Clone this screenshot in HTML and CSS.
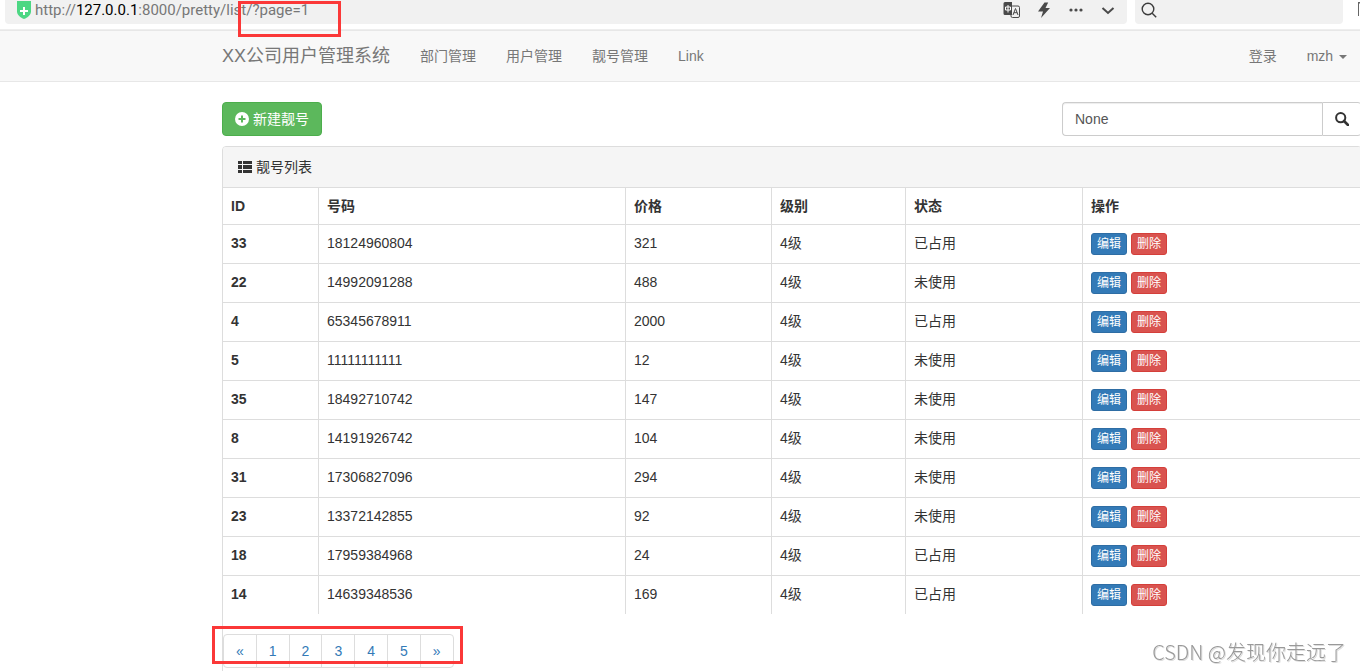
FILE: index.html
```html
<!DOCTYPE html>
<html lang="zh-CN">
<head>
<meta charset="utf-8">
<title>靓号列表</title>
<link rel="stylesheet" href="styles.css">
</head>
<body>
<svg class="sprite" aria-hidden="true">
  <symbol id="search" viewBox="0 0 14 14"><circle cx="5.700" cy="5.700" r="4.600" fill="none" stroke="currentColor" stroke-width="2"/><path d="M9 9l4 4" stroke="currentColor" stroke-width="2.600" stroke-linecap="round"/></symbol>
  <symbol id="plus" viewBox="0 0 14 14"><path fill="currentColor" fill-rule="evenodd" d="M7 0a7 7 0 1 0 0 14A7 7 0 0 0 7 0zM6 3.500h2V6h2.500v2H8v2.500H6V8H3.500V6H6z"/></symbol>
  <symbol id="list" viewBox="0 0 14 14"><path fill="currentColor" d="M0 1h4v3H0zM5 1h9v3H5zM0 5h4v4H0zM5 5h9v4H5zM0 10h4v3H0zM5 10h9v3H5z"/></symbol>
</svg>

<header class="browser">
  <div class="address">
    <svg class="shield" viewBox="0 0 14 18"><path fill="#4cd783" d="M0 0h14v10.500c0 3.500-3.500 6-7 7.500-3.500-1.500-7-4-7-7.500z"/><path d="M7 6v8M3 10h8" stroke="#fff" stroke-width="2"/></svg>
    <span class="url">http://<span class="host">127.0.0.1</span>:8000/pretty/list/?page=1</span>
    <div class="tools">
      <svg class="tool" viewBox="0 0 18 18"><rect x="8" y="5" width="8.500" height="11.500" rx="1.500" fill="#f1f1f1" stroke="#4a4a4a"/><path fill="#4a4a4a" d="M2 1h7v13H2a1.500 1.500 0 0 1-1.500-1.500v-10A1.500 1.500 0 0 1 2 1z"/><path d="M2.500 6h5v3h-5zM5 4v7.500" fill="none" stroke="#fff"/><path d="M10 14l2.500-6.500L15 14M10.800 11.700h3.400" fill="none" stroke="#4a4a4a"/></svg>
      <svg class="tool" viewBox="0 0 18 18"><path fill="#4a4a4a" d="M9.500 1.500h3.700L10.500 7H15L6 17l2-6.500H3z"/></svg>
      <svg class="tool" viewBox="0 0 18 18"><g fill="#4a4a4a"><circle cx="4" cy="9" r="1.600"/><circle cx="9" cy="9" r="1.600"/><circle cx="14" cy="9" r="1.600"/></g></svg>
      <svg class="tool" viewBox="0 0 18 18"><path d="M3.500 7L9 12l5.500-5" fill="none" stroke="#4a4a4a" stroke-width="2"/></svg>
    </div>
  </div>
  <div class="quick">
    <svg class="tool" viewBox="0 0 18 18"><circle cx="8" cy="8" r="5.800" fill="none" stroke="#3c3c3c" stroke-width="1.400"/><path d="M12.200 12.200l4 4" stroke="#3c3c3c" stroke-width="1.400"/></svg>
  </div>
  <svg class="edge" viewBox="0 0 2 14"><path fill="#666" d="M0 0h2v1.500H1V14H0z"/></svg>
  <div class="mark mark-url"></div>
</header>

<nav class="navbar">
  <div class="container nav-row">
    <a class="brand" href="#">XX公司用户管理系统</a>
    <a class="nav-link" href="#">部门管理</a>
    <a class="nav-link" href="#">用户管理</a>
    <a class="nav-link" href="#">靓号管理</a>
    <a class="nav-link" href="#">Link</a>
    <a class="nav-link nav-end" href="#">登录</a>
    <a class="nav-link" href="#">mzh <span class="caret"></span></a>
  </div>
</nav>

<main class="container">
  <div class="actions">
    <a class="btn-new" href="#"><svg class="icon"><use href="#plus"/></svg> 新建靓号</a>
    <form class="search">
      <input class="search-input" type="text" value="None" aria-label="搜索">
      <button class="search-btn" type="button" aria-label="搜索"><svg class="icon"><use href="#search"/></svg></button>
    </form>
  </div>

  <section class="panel">
    <h1 class="panel-heading"><svg class="icon"><use href="#list"/></svg> 靓号列表</h1>
    <table class="table">
      <colgroup><col class="c-id"><col class="c-mobile"><col class="c-price"><col class="c-level"><col class="c-status"><col></colgroup>
      <thead><tr><th>ID</th><th>号码</th><th>价格</th><th>级别</th><th>状态</th><th>操作</th></tr></thead>
      <tbody>
        <tr><th>33</th><td>18124960804</td><td>321</td><td>4级</td><td>已占用</td><td><div class="ops"><a class="btn-xs edit" href="#">编辑</a><a class="btn-xs del" href="#">删除</a></div></td></tr>
        <tr><th>22</th><td>14992091288</td><td>488</td><td>4级</td><td>未使用</td><td><div class="ops"><a class="btn-xs edit" href="#">编辑</a><a class="btn-xs del" href="#">删除</a></div></td></tr>
        <tr><th>4</th><td>65345678911</td><td>2000</td><td>4级</td><td>已占用</td><td><div class="ops"><a class="btn-xs edit" href="#">编辑</a><a class="btn-xs del" href="#">删除</a></div></td></tr>
        <tr><th>5</th><td>11111111111</td><td>12</td><td>4级</td><td>未使用</td><td><div class="ops"><a class="btn-xs edit" href="#">编辑</a><a class="btn-xs del" href="#">删除</a></div></td></tr>
        <tr><th>35</th><td>18492710742</td><td>147</td><td>4级</td><td>未使用</td><td><div class="ops"><a class="btn-xs edit" href="#">编辑</a><a class="btn-xs del" href="#">删除</a></div></td></tr>
        <tr><th>8</th><td>14191926742</td><td>104</td><td>4级</td><td>未使用</td><td><div class="ops"><a class="btn-xs edit" href="#">编辑</a><a class="btn-xs del" href="#">删除</a></div></td></tr>
        <tr><th>31</th><td>17306827096</td><td>294</td><td>4级</td><td>未使用</td><td><div class="ops"><a class="btn-xs edit" href="#">编辑</a><a class="btn-xs del" href="#">删除</a></div></td></tr>
        <tr><th>23</th><td>13372142855</td><td>92</td><td>4级</td><td>未使用</td><td><div class="ops"><a class="btn-xs edit" href="#">编辑</a><a class="btn-xs del" href="#">删除</a></div></td></tr>
        <tr><th>18</th><td>17959384968</td><td>24</td><td>4级</td><td>已占用</td><td><div class="ops"><a class="btn-xs edit" href="#">编辑</a><a class="btn-xs del" href="#">删除</a></div></td></tr>
        <tr><th>14</th><td>14639348536</td><td>169</td><td>4级</td><td>已占用</td><td><div class="ops"><a class="btn-xs edit" href="#">编辑</a><a class="btn-xs del" href="#">删除</a></div></td></tr>
      </tbody>
    </table>
    <div class="pager">
      <ul class="pagination">
        <li><a href="#">«</a></li><li><a href="#">1</a></li><li><a href="#">2</a></li><li><a href="#">3</a></li><li><a href="#">4</a></li><li><a href="#">5</a></li><li><a href="#">»</a></li>
      </ul>
      <div class="mark mark-pager"></div>
    </div>
  </section>
</main>
<div class="watermark">CSDN @发现你走远了</div>
</body>
</html>
```

FILE: styles.css
```css
* { box-sizing: border-box; }
html { overflow: hidden; }
body {
  margin: 0;
  min-height: 100vh;
  overflow: hidden;
  background: #fff;
  color: #333;
  font: 14px/20px "Liberation Sans", "Noto Sans CJK SC", sans-serif;
}
a { text-decoration: none; }
.sprite { position: absolute; width: 0; height: 0; }
.icon { width: 14px; height: 14px; vertical-align: -2px; }

.browser {
  position: relative;
  display: flex;
  gap: 8px;
  height: 30px;
  padding-left: 5px;
  border-bottom: 1px solid #eee;
}
.address, .quick {
  display: flex;
  align-items: center;
  height: 24px;
  background: #f1f1f1;
  border-radius: 0 0 4px 4px;
}
.address { flex: 1; padding: 0 10px 4px 12px; }
.quick { width: 208px; padding: 0 5px 4px; }
.edge { width: 2px; height: 14px; margin: 2px 0 0 7px; }
.shield { width: 14px; height: 18px; margin-right: 4px; }
.url { color: #777; font: 15px/20px Roboto, "Noto Sans", sans-serif; white-space: nowrap; }
.host { color: #000; }
.tools { display: flex; gap: 14px; margin-left: auto; }
.tool { width: 18px; height: 18px; }

.mark { position: absolute; border: 3px solid #fb3838; pointer-events: none; }
.mark-url { left: 238px; top: 1px; width: 103px; height: 36px; }
.mark-pager { left: -11px; top: -8px; width: 251px; height: 38px; }

.container { margin: 0 -2px 0 222px; }
.navbar { background: #f8f8f8; border: solid #e7e7e7; border-width: 1px 0; }
.nav-row { display: flex; }
.brand { padding: 15px 15px 15px 0; color: #777; font-size: 18px; line-height: 20px; }
.nav-link { padding: 15px; color: #777; }
.nav-end { margin-left: auto; }
.caret {
  display: inline-block;
  margin-left: 2px;
  vertical-align: middle;
  border: 4px solid transparent;
  border-top-color: currentColor;
  border-bottom: 0;
}

.actions { display: flex; justify-content: space-between; margin: 20px 0 10px; }
.btn-new {
  padding: 6px 12px;
  border: 1px solid #4cae4c;
  border-radius: 4px;
  background: #5cb85c;
  color: #fff;
}
.search { display: flex; width: 300px; }
.search-input {
  flex: 1;
  min-width: 0;
  height: 34px;
  padding: 6px 12px;
  border: 1px solid #ccc;
  border-right: 0;
  border-radius: 4px 0 0 4px;
  box-shadow: inset 0 1px 1px rgba(0, 0, 0, .075);
  color: #555;
  font: inherit;
}
.search-btn {
  padding: 6px 12px;
  border: 1px solid #ccc;
  border-radius: 0 4px 4px 0;
  background: #fff;
  color: #333;
  font: inherit;
}

.panel { border: 1px solid #ddd; border-radius: 4px; }
.panel-heading {
  margin: 0;
  padding: 10px 15px;
  border-bottom: 1px solid #ddd;
  background: #f5f5f5;
  border-radius: 3px 3px 0 0;
  font-size: 14px;
  font-weight: 400;
  line-height: 20px;
}
.table { width: 100%; table-layout: fixed; border-spacing: 0; }
.table th, .table td { padding: 8px; text-align: left; vertical-align: top; border-right: 1px solid #ddd; }
.table tr > :last-child { border-right: 0; }
.table tbody th, .table tbody td { border-top: 1px solid #ddd; }
.c-id { width: 96px; }
.c-mobile { width: 307px; }
.c-price { width: 146px; }
.c-level { width: 134px; }
.c-status { width: 177px; }
.ops { display: flex; gap: 4px; }
.btn-xs { padding: 1px 5px; border: 1px solid; border-radius: 3px; color: #fff; font-size: 12px; line-height: 18px; }
.edit { background: #337ab7; border-color: #2e6da4; }
.del { background: #d9534f; border-color: #d43f3a; }

.pager { position: relative; margin: 20px 0; }
.pagination { display: flex; margin: 0; padding: 0; list-style: none; }
.pagination a { display: block; padding: 6px 12px; margin-left: -1px; border: 1px solid #ddd; color: #337ab7; }
.pagination li:first-child a { margin-left: 0; border-radius: 4px 0 0 4px; }
.pagination li:last-child a { border-radius: 0 4px 4px 0; }

.watermark {
  position: fixed;
  right: 14px;
  bottom: 4px;
  color: #999;
  font: 300 20px/30px "Noto Sans CJK SC", sans-serif;
  text-shadow: 1px 1px 0 #ddd;
}
```
